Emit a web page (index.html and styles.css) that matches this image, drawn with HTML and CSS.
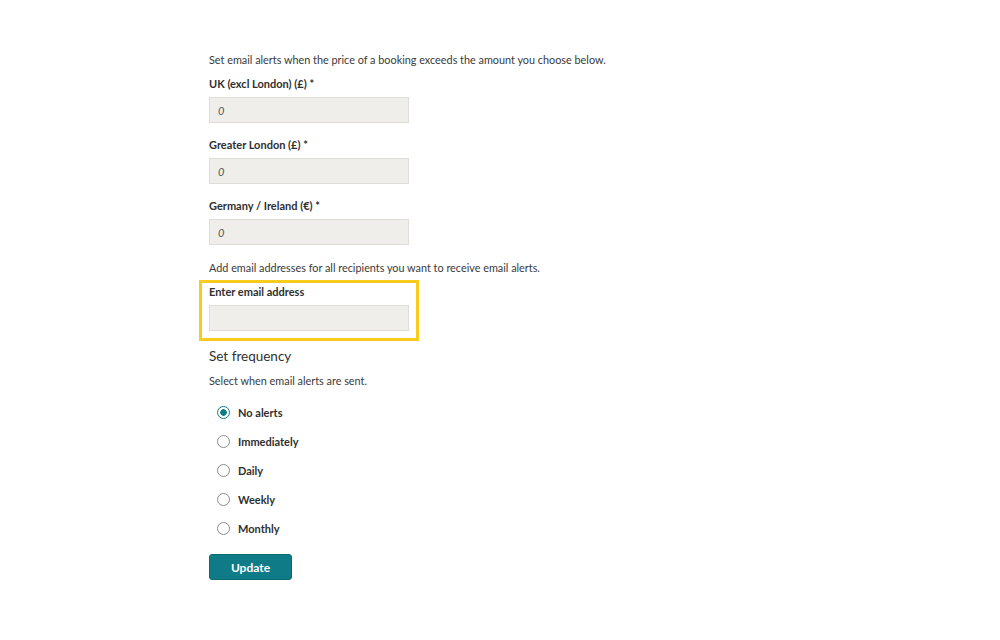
FILE: index.html
```html
<!DOCTYPE html>
<html lang="en">
<head>
  <meta charset="utf-8">
  <title>Email alerts</title>
  <link rel="stylesheet" href="styles.css">
</head>
<body>
  <main class="page">
    <form class="alerts-form" onsubmit="event.preventDefault()">
      <p class="hint intro">Set email alerts when the price of a booking exceeds the amount you choose below.</p>

      <div class="field">
        <label for="uk">UK (excl London) (£) *</label>
        <input type="text" id="uk" placeholder="0">
      </div>

      <div class="field">
        <label for="london">Greater London (£) *</label>
        <input type="text" id="london" placeholder="0">
      </div>

      <div class="field">
        <label for="de">Germany / Ireland (€) *</label>
        <input type="text" id="de" placeholder="0">
      </div>

      <p class="hint">Add email addresses for all recipients you want to receive email alerts.</p>

      <div class="field highlight">
        <label for="email">Enter email address</label>
        <input type="email" id="email">
      </div>

      <h2>Set frequency</h2>
      <p class="hint">Select when email alerts are sent.</p>

      <ul class="radio-list">
        <li><label><input type="radio" name="freq" checked> No alerts</label></li>
        <li><label><input type="radio" name="freq"> Immediately</label></li>
        <li><label><input type="radio" name="freq"> Daily</label></li>
        <li><label><input type="radio" name="freq"> Weekly</label></li>
        <li><label><input type="radio" name="freq"> Monthly</label></li>
      </ul>

      <button type="submit" class="btn">Update</button>
    </form>
  </main>
</body>
</html>
```

FILE: styles.css
```css
:root {
  --text-color: #3a3a3a;
  --label-color: #2f2f2f;
  --input-bg: #efeeea;
  --input-border: #dfddd8;
  --highlight: #f8cb1c;
  --teal: #0f7b86;
}

body {
  font-family: Lato, "Open Sans", Arial, sans-serif;
  margin: 0;
  padding: 0;
  background-color: #ffffff;
  color: var(--text-color);
}

.page {
  padding: 52px 0 40px 209px;
}

.alerts-form {
  display: flex;
  flex-direction: column;
  align-items: flex-start;
}

.hint {
  margin: 0;
  font-size: 10.85px;
  line-height: 16px;
}

.intro {
  margin-bottom: 8px;
}

.field {
  display: flex;
  flex-direction: column;
  gap: 5px;
  margin-bottom: 15px;
}

.field label {
  font-size: 11px;
  line-height: 16px;
  font-weight: bold;
  color: var(--label-color);
}

.field input {
  box-sizing: border-box;
  width: 200px;
  height: 26px;
  margin: 0;
  padding: 0 8px;
  background-color: var(--input-bg);
  border: 1px solid var(--input-border);
  font-family: inherit;
  font-size: 11px;
  font-style: italic;
}

.field input::placeholder {
  color: #555;
}

.field:nth-of-type(1),
.field:nth-of-type(2) {
  margin-bottom: 14px;
}

.highlight {
  margin: 4px 0 0 -10px;
  padding: 1px 7px 7px;
  border: 3px solid var(--highlight);
}

h2 {
  margin: 6px 0 8px;
  font-size: 13.5px;
  line-height: 18px;
  font-weight: normal;
  color: #2f2f2f;
}

.radio-list {
  list-style: none;
  margin: 9px 0 0;
  padding: 0;
}

.radio-list li {
  height: 29px;
  display: flex;
  align-items: center;
}

.radio-list label {
  display: flex;
  align-items: center;
  gap: 8px;
  padding-left: 8px;
  font-size: 11px;
  font-weight: bold;
  color: var(--label-color);
}

.radio-list input {
  appearance: none;
  box-sizing: border-box;
  width: 13px;
  height: 13px;
  margin: 0;
  border: 1.5px solid #8c8c8c;
  border-radius: 50%;
  background: #fff;
}

.radio-list input:checked {
  border-color: var(--teal);
  background: radial-gradient(circle, var(--teal) 0 3px, #fff 3.5px);
}

.btn {
  margin-top: 11px;
  width: 83px;
  height: 26px;
  padding: 0;
  background-color: var(--teal);
  color: #fff;
  border: 1px solid #0b6a73;
  border-radius: 3px;
  font-family: inherit;
  font-size: 12px;
  font-weight: bold;
}
```
